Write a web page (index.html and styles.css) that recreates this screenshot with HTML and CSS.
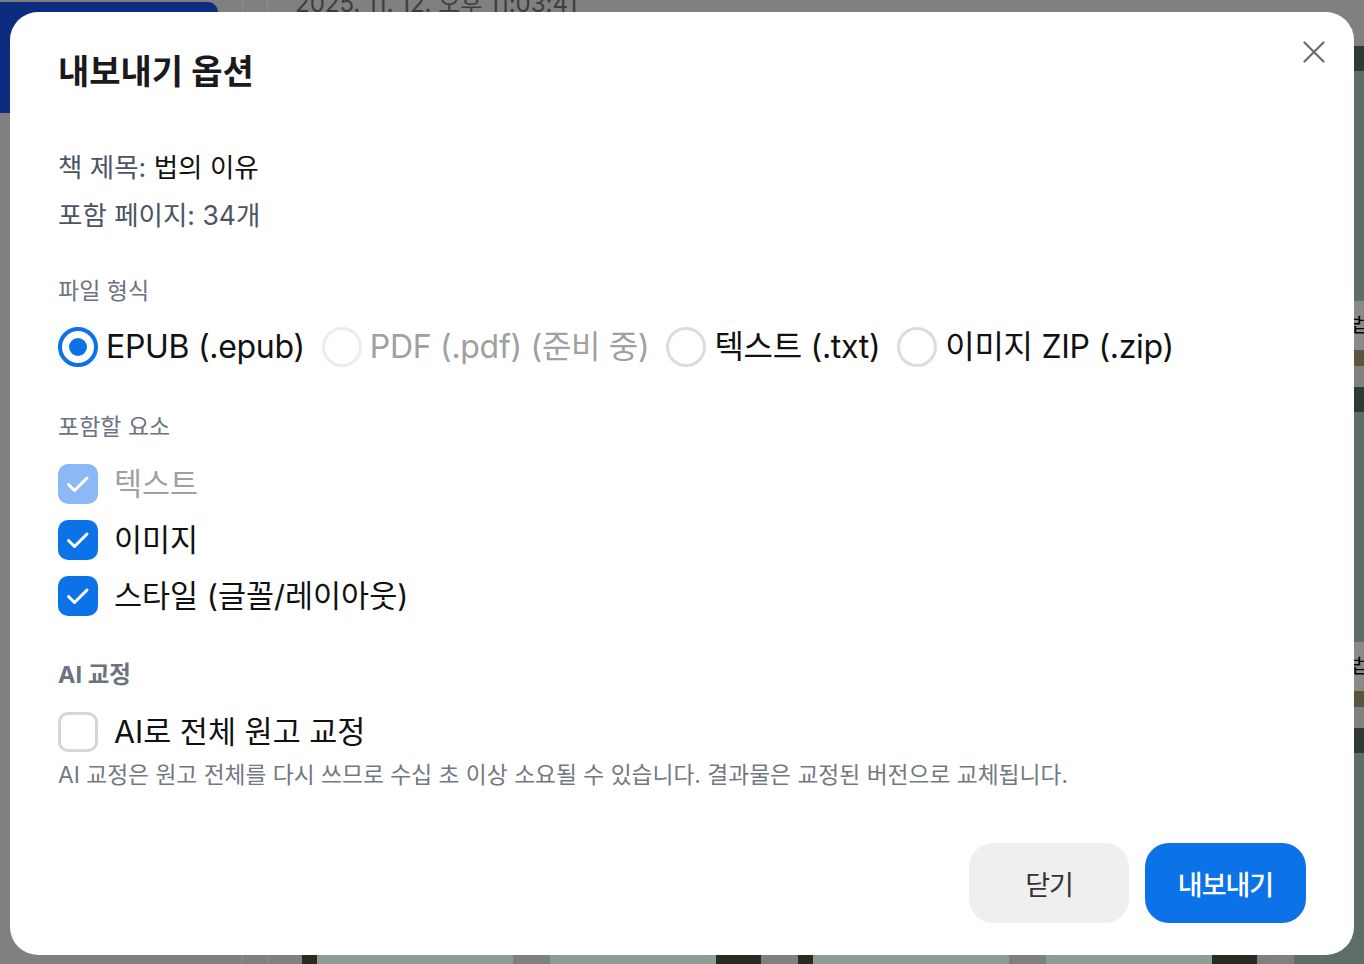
FILE: index.html
```html
<!DOCTYPE html>
<html lang="ko">
<head>
<meta charset="utf-8">
<title>내보내기 옵션</title>
<link rel="stylesheet" href="styles.css">
</head>
<body>
<div class="page">
  <aside class="side"><div class="brand"></div></aside>
  <div class="rail"></div>
  <main class="main">
    <div class="date">2025. 11. 12. 오후 11:03:41</div>
    <div class="grid">
      <div class="card"><div class="thumb"></div><div class="cap">법의 이유</div><div class="band"></div></div>
      <div class="card"><div class="thumb"></div><div class="cap">법의 이유</div><div class="band"></div></div>
      <div class="card"><div class="thumb"></div><div class="cap">법의 이유</div><div class="band"></div></div>
      <div class="card"><div class="thumb"></div><div class="cap">법의 이유</div><div class="band"></div></div>
      <div class="card"><div class="thumb"></div><div class="cap">법의 이유</div><div class="band"></div></div>
      <div class="card"><div class="thumb"></div><div class="cap">법의 이유</div><div class="band"></div></div>
      <div class="card"><div class="thumb"></div><div class="cap">법의 이유</div><div class="band"></div></div>
      <div class="card"><div class="thumb"></div><div class="cap">법의 이유</div><div class="band"></div></div>
      <div class="card"><div class="thumb"></div><div class="cap">법의 이유</div><div class="band"></div></div>
      <div class="card"><div class="thumb"></div><div class="cap">법의 이유</div><div class="band"></div></div>
      <div class="card"><div class="thumb pale"></div><div class="cap">법의 이유</div><div class="band"></div></div>
      <div class="card"><div class="thumb pale-r"></div><div class="cap">법의 이유</div><div class="band"></div></div>
      <div class="card"><div class="thumb pale"></div><div class="cap">법의 이유</div><div class="band"></div></div>
      <div class="card"><div class="thumb pale-r"></div><div class="cap">법의 이유</div><div class="band"></div></div>
      <div class="card"><div class="thumb"></div><div class="cap">법의 이유</div><div class="band"></div></div>
    </div>
  </main>
</div>

<div class="backdrop">
  <div class="modal" role="dialog" aria-labelledby="dlg-title">
    <button class="close" type="button" aria-label="닫기">
      <svg width="22" height="22" viewBox="0 0 22 22" aria-hidden="true"><path d="M1.5 1.5 L20.5 20.5 M20.5 1.5 L1.5 20.5" fill="none" stroke="#6f6f6f" stroke-width="2.3" stroke-linecap="round"/></svg>
    </button>
    <h2 class="title" id="dlg-title">내보내기 옵션</h2>

    <div class="info">
      <p>책 제목: <strong>법의 이유</strong></p>
      <p>포함 페이지: 34개</p>
    </div>

    <section class="group group-format">
      <h3 class="label">파일 형식</h3>
      <div class="radios">
        <label class="radio is-checked"><span class="radio-dot"></span>EPUB (.epub)</label>
        <label class="radio is-disabled"><span class="radio-dot"></span>PDF (.pdf) (준비 중)</label>
        <label class="radio"><span class="radio-dot"></span>텍스트 (.txt)</label>
        <label class="radio"><span class="radio-dot"></span>이미지 ZIP (.zip)</label>
      </div>
    </section>

    <section class="group group-include">
      <h3 class="label">포함할 요소</h3>
      <div class="checks">
        <label class="check is-checked is-disabled"><span class="box"><svg width="40" height="40" viewBox="0 0 40 40" aria-hidden="true"><path d="M10.5 20.5 L16.5 26.5 L29 14" fill="none" stroke="#fff" stroke-width="3" stroke-linecap="round" stroke-linejoin="round"/></svg></span>텍스트</label>
        <label class="check is-checked"><span class="box"><svg width="40" height="40" viewBox="0 0 40 40" aria-hidden="true"><path d="M10.5 20.5 L16.5 26.5 L29 14" fill="none" stroke="#fff" stroke-width="3" stroke-linecap="round" stroke-linejoin="round"/></svg></span>이미지</label>
        <label class="check is-checked"><span class="box"><svg width="40" height="40" viewBox="0 0 40 40" aria-hidden="true"><path d="M10.5 20.5 L16.5 26.5 L29 14" fill="none" stroke="#fff" stroke-width="3" stroke-linecap="round" stroke-linejoin="round"/></svg></span>스타일 (글꼴/레이아웃)</label>
      </div>
    </section>

    <section class="group group-ai">
      <h3 class="label label-strong">AI 교정</h3>
      <div class="checks">
        <label class="check"><span class="box"></span>AI로 전체 원고 교정</label>
      </div>
      <p class="help">AI 교정은 원고 전체를 다시 쓰므로 수십 초 이상 소요될 수 있습니다. 결과물은 교정된 버전으로 교체됩니다.</p>
    </section>

    <div class="actions">
      <button class="btn btn-secondary" type="button">닫기</button>
      <button class="btn btn-primary" type="button">내보내기</button>
    </div>
  </div>
</div>
</body>
</html>
```

FILE: styles.css
```css
* { box-sizing: border-box; }
html, body { margin: 0; padding: 0; }
body {
  width: 1364px;
  height: 964px;
  overflow: hidden;
  background: #c5c5c5;
  font-family: Inter, "Noto Sans CJK KR", sans-serif;
}

/* background page */
.page { display: flex; height: 964px; overflow: hidden; }
.side { width: 243px; flex: none; border-right: 1px solid #d9d9d9; }
.brand { width: 218px; height: 111px; margin-top: 2px; background: #1444c5; border-radius: 0 10px 0 0; }
.rail { width: 25px; flex: none; border-right: 1px solid #d9d9d9; }
.main { flex: 1; min-width: 0; padding-left: 27px; }
.date { font-size: 24px; line-height: 30px; margin-top: -11px; color: #5e5e5e; white-space: nowrap; }
.grid {
  margin-top: 27px;
  margin-left: 7px;
  display: grid;
  grid-template-columns: repeat(5, 211px);
  column-gap: 37px;
  row-gap: 21px;
}
.card { display: flex; flex-direction: column; height: 320px; }
.thumb { height: 255px; background: linear-gradient(#475953 0 25px, #8fa9a2 25px); }
.thumb.pale { background: linear-gradient(90deg, #424131 0 15px, #daf0e7 15px); }
.thumb.pale-r { background: linear-gradient(90deg, #daf0e7 0 166px, #424131 166px); }
.cap {
  height: 49px;
  background: #d4d4d4;
  font-size: 20px;
  line-height: 49px;
  padding-left: 56px;
  color: #000;
  white-space: nowrap;
  overflow: hidden;
}
.band { height: 16px; background: #8a8362; }

/* dialog */
.backdrop {
  position: fixed;
  inset: 0;
  background: rgba(0, 0, 0, 0.35);
  display: flex;
  padding: 12px 10px 9px;
}
.modal {
  position: relative;
  flex: 1;
  background: #fff;
  border-radius: 28px;
  padding: 40px 48px 32px;
  display: flex;
  flex-direction: column;
  color: #111;
}
.close {
  position: absolute;
  top: 20px;
  right: 20px;
  width: 40px;
  height: 40px;
  border: 0;
  padding: 0;
  background: none;
  display: grid;
  place-items: center;
  cursor: pointer;
}
.title {
  margin: 0;
  font-size: 34px;
  line-height: 40px;
  font-weight: 700;
  color: #1a1a1a;
}
.info { margin-top: 51px; }
.info p { margin: 0; font-size: 26.5px; line-height: 48px; color: #4b5563; }
.info strong { font-weight: 400; color: #111; }

.label { margin: 0; font-size: 23px; line-height: 30px; font-weight: 400; color: #6b7280; }
.label-strong { font-weight: 700; font-size: 23.5px; }

.group-format { margin-top: 37px; }
.group-include { margin-top: 45px; }
.group-ai { margin-top: 44px; }

.radios { margin-top: 21px; display: flex; gap: 17px; }
.radio {
  display: flex;
  align-items: center;
  gap: 8px;
  font-size: 32px;
  letter-spacing: -0.3px;
  line-height: 40px;
  color: #111;
  white-space: nowrap;
}
.radio-dot {
  flex: none;
  width: 40px;
  height: 40px;
  border-radius: 50%;
  border: 3px solid #dcdcdc;
  display: grid;
  place-items: center;
}
.radio.is-checked .radio-dot { border: 4px solid #0b72e8; }
.radio.is-checked .radio-dot::after {
  content: "";
  width: 18px;
  height: 18px;
  border-radius: 50%;
  background: #0b72e8;
}
.radio.is-disabled { color: #a0a0a0; }
.radio.is-disabled .radio-dot { border-color: #ececec; }

.checks { margin-top: 22px; display: flex; flex-direction: column; gap: 16px; }
.check {
  display: flex;
  align-items: center;
  gap: 16px;
  font-size: 30.5px;
  line-height: 40px;
  color: #111;
  white-space: nowrap;
}
.box {
  flex: none;
  width: 40px;
  height: 40px;
  border-radius: 10px;
  border: 3px solid #d6d6d6;
  display: block;
}
.box svg { display: block; }
.check.is-checked .box { border: 0; background: #0b72e8; }
.check.is-checked.is-disabled .box { background: #8cb9f5; }
.check.is-disabled { color: #a0a0a0; }

.help {
  margin: 8px 0 0;
  font-size: 22.75px;
  line-height: 30px;
  color: #737880;
  white-space: nowrap;
}

.actions { margin-top: auto; display: flex; justify-content: flex-end; gap: 16px; }
.btn {
  width: 160px;
  height: 80px;
  border: 0;
  border-radius: 24px;
  font-family: inherit;
  font-size: 27px;
  letter-spacing: -1px;
  cursor: pointer;
}
.btn-secondary { background: #efefef; color: #333; }
.btn-primary { width: 161px; background: #0b72e8; color: #fff; font-weight: 500; }
```
